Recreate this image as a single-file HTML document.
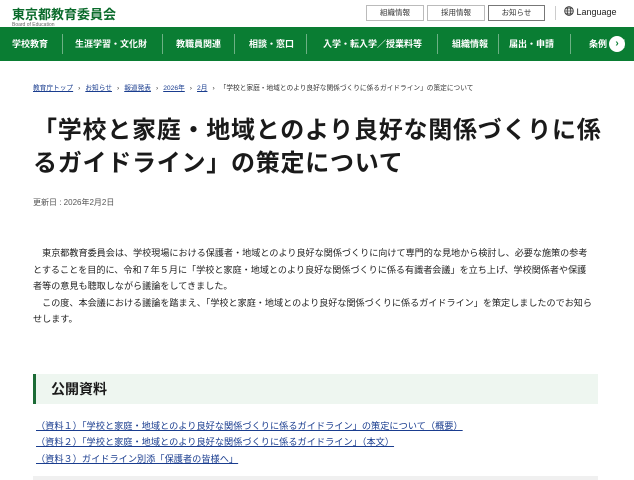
<!DOCTYPE html>
<html><head><meta charset="utf-8"><style>
*{margin:0;padding:0;box-sizing:border-box}
body{width:634px;height:480px;overflow:hidden;background:#fff;font-family:"Liberation Sans","Noto Sans CJK JP",sans-serif;color:#222;position:relative}
.a{position:absolute;white-space:nowrap}
.logo{left:12px;top:4px;font-size:13px;font-weight:bold;color:#0b6b2c}
.logo small{display:block;font-size:5px;font-weight:normal;color:#666;margin-top:-1px}
.btn{top:5px;height:16px;border:1px solid #bbb;font-size:7.5px;line-height:14px;text-align:center;color:#333;background:#fff}
.nav{left:0;top:27px;width:634px;height:34px;background:#0a7d33}
.nav span{position:absolute;top:0;line-height:34px;color:#fff;font-size:9px;font-weight:bold}
.nav i{position:absolute;top:7px;width:1px;height:20px;background:rgba(255,255,255,.4)}
.bc{top:82px;left:33px;font-size:6.7px;color:#333}
.bc u{color:#1a3d8f}
.bc b{font-weight:normal;margin:0 5px}
h1{position:absolute;left:33px;top:114px;font-size:24px;line-height:33px;letter-spacing:.75px;font-weight:bold;color:#1a1a1a;white-space:nowrap}
.date{left:33px;top:197px;font-size:8px;color:#555}
.body{left:33px;top:245px;font-size:9.1px;line-height:16.5px;color:#222}
.sec{left:33px;top:374px;width:565px;height:30px;background:#eef6f0;border-left:3px solid #1c6b36}
.sec span{position:absolute;left:15px;top:0;line-height:30px;font-size:14px;font-weight:bold;color:#1a1a1a}
.lk{left:36px;font-size:9.2px;color:#1a3d8f;text-decoration:underline}
</style></head><body>
<div class="a logo">東京都教育委員会<small>Board of Education</small></div>
<div class="a btn" style="left:366px;width:58px">組織情報</div>
<div class="a btn" style="left:427px;width:58px">採用情報</div>
<div class="a btn" style="left:488px;width:57px;border-color:#777">お知らせ</div>
<div class="a" style="left:555px;top:6px;width:1px;height:14px;background:#ccc"></div>
<div class="a" style="left:564px;top:6px;font-size:9px;color:#222"><svg width="10" height="10" viewBox="0 0 10 10" style="vertical-align:-1px"><circle cx="5" cy="5" r="4.3" fill="none" stroke="#333" stroke-width=".9"/><ellipse cx="5" cy="5" rx="1.8" ry="4.3" fill="none" stroke="#333" stroke-width=".8"/><path d="M.7 5h8.6M1.5 2.8h7M1.5 7.2h7" stroke="#333" stroke-width=".7"/></svg> Language</div>
<div class="a nav">
<span style="left:12px">学校教育</span><i style="left:62px"></i>
<span style="left:75px">生涯学習・文化財</span><i style="left:162px"></i>
<span style="left:176px">教職員関連</span><i style="left:234px"></i>
<span style="left:249px">相談・窓口</span><i style="left:306px"></i>
<span style="left:323px">入学・転入学／授業料等</span><i style="left:437px"></i>
<span style="left:452px">組織情報</span><i style="left:498px"></i>
<span style="left:509px">届出・申請</span><i style="left:570px"></i>
<span style="left:589px">条例・画</span>
<div style="position:absolute;left:609px;top:9px;width:16px;height:16px;border-radius:50%;background:#fff;color:#0a7d33;font-size:10px;line-height:16px;text-align:center;font-weight:bold">›</div>
</div>
<div class="a bc"><u>教育庁トップ</u><b>›</b><u>お知らせ</u><b>›</b><u>報道発表</u><b>›</b><u>2026年</u><b>›</b><u>2月</u><b>›</b>「学校と家庭・地域とのより良好な関係づくりに係るガイドライン」の策定について</div>
<h1>「学校と家庭・地域とのより良好な関係づくりに係<br>るガイドライン」の策定について</h1>
<div class="a date">更新日 : 2026年2月2日</div>
<div class="a body">　東京都教育委員会は、学校現場における保護者・地域とのより良好な関係づくりに向けて専門的な見地から検討し、必要な施策の参考<br>とすることを目的に、令和７年５月に「学校と家庭・地域とのより良好な関係づくりに係る有識者会議」を立ち上げ、学校関係者や保護<br>者等の意見も聴取しながら議論をしてきました。<br>　この度、本会議における議論を踏まえ、「学校と家庭・地域とのより良好な関係づくりに係るガイドライン」を策定しましたのでお知ら<br>せします。</div>
<div class="a sec"><span>公開資料</span></div>
<div class="a lk" style="top:418px">（資料１）「学校と家庭・地域とのより良好な関係づくりに係るガイドライン」の策定について（概要）</div>
<div class="a lk" style="top:434px">（資料２）「学校と家庭・地域とのより良好な関係づくりに係るガイドライン」（本文）</div>
<div class="a lk" style="top:451px">（資料３）ガイドライン別添「保護者の皆様へ」</div>
<div class="a" style="left:33px;top:476px;width:565px;height:4px;background:#f0f0f0"></div>
</body></html>
